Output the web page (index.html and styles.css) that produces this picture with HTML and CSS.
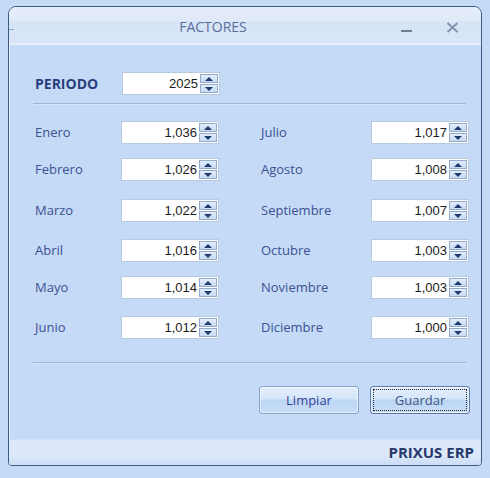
FILE: index.html
```html
<!DOCTYPE html>
<html lang="es">
<head>
<meta charset="utf-8">
<title>FACTORES</title>
<link rel="stylesheet" href="styles.css">
</head>
<body>
<div class="window">
  <div class="titlebar">
    <span class="tick"></span>
    <div class="title">FACTORES</div>
    <div class="controls">
      <span class="min"></span>
      <svg class="close" width="13" height="11" viewBox="0 0 13 11"><path d="M1.5 1 L11.5 10 M11.5 1 L1.5 10" stroke="#8494a8" stroke-width="2" fill="none"/></svg>
    </div>
  </div>
  <div class="body">
    <div class="periodo">
      <span class="plabel">PERIODO</span>
      <div class="spin">
        <span class="val">2025</span>
        <div class="btns"><span class="up"></span><span class="dn"></span></div>
      </div>
    </div>
    <div class="sep"></div>
    <div class="grid">
      <span class="lbl">Enero</span>
      <div class="spin"><span class="val">1,036</span><div class="btns"><span class="up"></span><span class="dn"></span></div></div>
      <span class="lbl">Julio</span>
      <div class="spin"><span class="val">1,017</span><div class="btns"><span class="up"></span><span class="dn"></span></div></div>

      <span class="lbl">Febrero</span>
      <div class="spin"><span class="val">1,026</span><div class="btns"><span class="up"></span><span class="dn"></span></div></div>
      <span class="lbl">Agosto</span>
      <div class="spin"><span class="val">1,008</span><div class="btns"><span class="up"></span><span class="dn"></span></div></div>

      <span class="lbl">Marzo</span>
      <div class="spin"><span class="val">1,022</span><div class="btns"><span class="up"></span><span class="dn"></span></div></div>
      <span class="lbl">Septiembre</span>
      <div class="spin"><span class="val">1,007</span><div class="btns"><span class="up"></span><span class="dn"></span></div></div>

      <span class="lbl">Abril</span>
      <div class="spin"><span class="val">1,016</span><div class="btns"><span class="up"></span><span class="dn"></span></div></div>
      <span class="lbl">Octubre</span>
      <div class="spin"><span class="val">1,003</span><div class="btns"><span class="up"></span><span class="dn"></span></div></div>

      <span class="lbl">Mayo</span>
      <div class="spin"><span class="val">1,014</span><div class="btns"><span class="up"></span><span class="dn"></span></div></div>
      <span class="lbl">Noviembre</span>
      <div class="spin"><span class="val">1,003</span><div class="btns"><span class="up"></span><span class="dn"></span></div></div>

      <span class="lbl">Junio</span>
      <div class="spin"><span class="val">1,012</span><div class="btns"><span class="up"></span><span class="dn"></span></div></div>
      <span class="lbl">Diciembre</span>
      <div class="spin"><span class="val">1,000</span><div class="btns"><span class="up"></span><span class="dn"></span></div></div>
    </div>
    <div class="sep sep2"></div>
    <div class="actions">
      <button class="btn">Limpiar</button>
      <button class="btn focus"><span>Guardar</span></button>
    </div>
  </div>
  <div class="footer">PRIXUS ERP</div>
</div>
</body>
</html>
```
FILE: styles.css
```css
html, body { margin: 0; padding: 0; }
body {
  background: #c5daf5;
  width: 490px;
  height: 478px;
  overflow: hidden;
  font-family: "Open Sans", "Noto Sans", sans-serif;
  font-size: 12px;
}
.window {
  box-sizing: border-box;
  margin: 6px 0 0 8px;
  width: 474px;
  height: 460px;
  border: 1px solid #3d5a80;
  border-radius: 8px 8px 4px 4px;
  background: #c4daf6;
  display: flex;
  flex-direction: column;
  overflow: hidden;
  box-shadow: inset 1px 0 0 #e3edf9;
}
.titlebar {
  position: relative;
  height: 37px;
  flex: none;
  display: flex;
  align-items: center;
  background: linear-gradient(#e6eefa 0, #dfe9f8 14px, #d6e4f7 15px, #d9e6f8 36px, #e8f0fb 37px);
  border-bottom: 1px solid #eaf1fb;
}
.tick {
  position: absolute;
  left: 0; top: 22px;
  width: 5px; height: 1px;
  background: #8ea6c6;
}
.title {
  flex: 1;
  text-align: center;
  color: #5a6f9c;
  font-size: 14px;
  padding-top: 2px;
  padding-left: 16px;
}
.controls {
  display: flex;
  align-items: center;
  gap: 34px;
  padding-top: 4px;
  padding-right: 22px;
}
.min { width: 11px; height: 2px; background: #6f7e93; margin-top: 6px; }
.close { margin-top: -1px; }
.body {
  flex: 1;
  padding: 27px 11px 0 24px;
}
.periodo {
  display: flex;
  align-items: center;
  height: 23px;
}
.plabel {
  width: 87px;
  padding-left: 2px;
  font-weight: bold;
  font-size: 14px;
  color: #283f7c;
}
.spin {
  box-sizing: border-box;
  width: 98px;
  height: 23px;
  background: #fff;
  border: 1px solid #b9c9df;
  display: flex;
  align-items: center;
  justify-content: flex-end;
  padding-right: 1px;
}
.val {
  color: #1b1b1b;
  font-family: "Liberation Sans", Arial, sans-serif;
  font-size: 13px;
  padding-right: 2px;
}
.btns {
  display: flex;
  flex-direction: column;
  gap: 1px;
  width: 18px;
  height: 19px;
}
.btns span {
  flex: 1;
  box-sizing: border-box;
  border: 1px solid #93aacb;
  background: linear-gradient(#e3edfa, #c7daf3);
  position: relative;
}
.btns span::after {
  content: "";
  position: absolute;
  left: 50%;
  top: 50%;
  margin-left: -4px;
  border-left: 4px solid transparent;
  border-right: 4px solid transparent;
}
.btns .up::after { margin-top: -2px; border-bottom: 4px solid #1f3a6e; }
.btns .dn::after { margin-top: -2px; border-top: 4px solid #1f3a6e; }
.sep {
  height: 1px;
  background: #9eb5d4;
  margin: 8px 4px 0 0;
  box-shadow: 0 1px 0 #d3e3f8;
}
.grid {
  display: grid;
  grid-template-columns: 88px 98px 152px 98px;
  grid-template-rows: 37px 41px 40px 37px 40px 23px;
  align-items: start;
  margin-top: 17px;
}
.lbl {
  color: #3c5191;
  font-size: 13px;
  line-height: 23px;
  padding-left: 2px;
}
.grid .lbl:nth-child(4n+3) { padding-left: 42px; }
.sep2 { margin-top: 23px; }
.actions {
  display: flex;
  justify-content: flex-end;
  gap: 11px;
  margin-top: 23px;
  padding-right: 0;
}
.btn {
  box-sizing: border-box;
  width: 100px;
  height: 28px;
  border: 1px solid #8aa4c8;
  border-radius: 3px;
  background: linear-gradient(#e3eefc 0, #d5e6fa 12px, #bcd6f5 13px, #c9def7 27px);
  color: #363f96;
  font-family: "Open Sans", "Noto Sans", sans-serif;
  font-size: 13px;
  padding: 0;
  box-shadow: inset 0 0 0 1px rgba(255,255,255,0.5);
}
.btn.focus {
  border-color: #5f7ba5;
  color: #3f5580;
  padding: 2px;
}
.btn.focus span {
  display: flex;
  align-items: center;
  justify-content: center;
  height: 100%;
  box-sizing: border-box;
  border: 1px dotted #2a2a2a;
}
.footer {
  flex: none;
  height: 26px;
  box-sizing: border-box;
  background: linear-gradient(#dde9fa 0, #dbe8fa 16px, #c8dbf5 26px);
  border-top: 1px solid #d0e0f6;
  text-align: right;
  padding: 2px 7px 0 0;
  font-weight: bold;
  font-size: 15px;
  color: #28396b;
}
```
